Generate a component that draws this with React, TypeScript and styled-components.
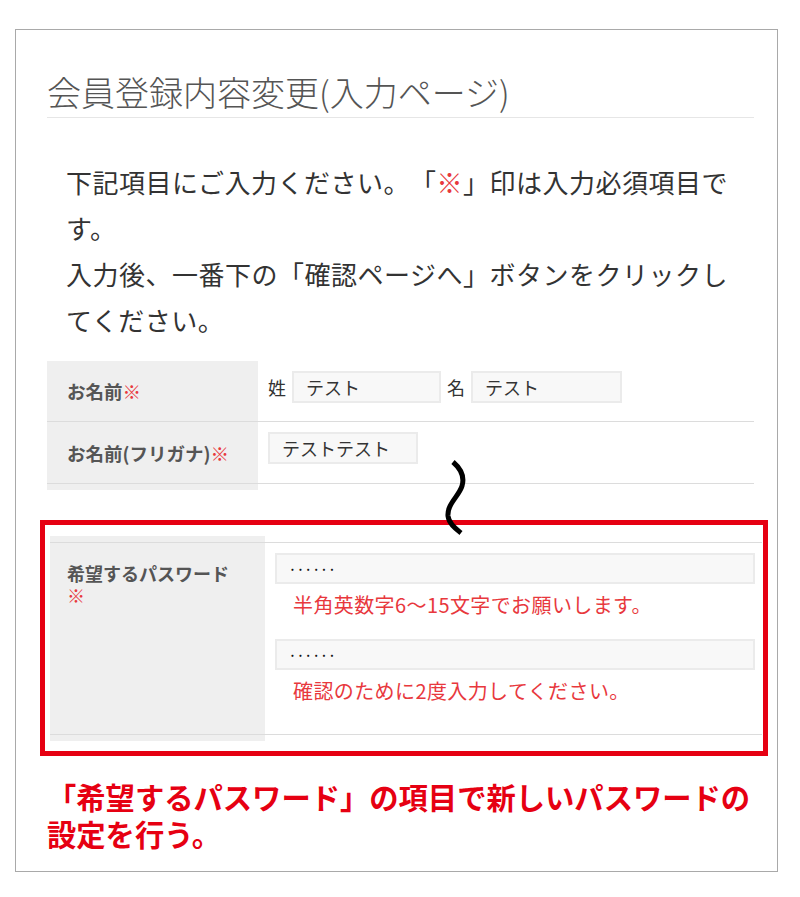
import styled, { createGlobalStyle } from "styled-components";

const GlobalStyle = createGlobalStyle`
  body {
    margin: 0;
    background: #fff;
    font-family: "Noto Sans CJK JP", "Noto Sans", sans-serif;
    text-spacing-trim: space-all;
  }
`;

const Frame = styled.div`
  position: relative;
  box-sizing: border-box;
  width: 763px;
  height: 843px;
  margin: 29px 0 0 15px;
  border: 1px solid #a9a9a9;
  padding: 42px 23px 0 31px;
`;

const Title = styled.h1`
  margin: 0;
  padding-bottom: 5px;
  font-size: 34px;
  line-height: 40px;
  font-weight: 300;
  color: #555;
  border-bottom: 1px solid #e6e6e6;
`;

const Intro = styled.p`
  width: 670px;
  margin: 41px 0 0 19px;
  font-size: 26px;
  line-height: 46px;
  letter-spacing: 0.5px;
  color: #333;
`;

const Mark = styled.span`
  color: #e8383d;
`;

const Table = styled.div`
  margin-top: 18px;
`;

const Row = styled.div<{ $height: number }>`
  display: grid;
  grid-template-columns: 211px 1fr;
  height: ${(p) => p.$height}px;
  border-bottom: 1px solid #dcdcdc;
`;

const Label = styled.div`
  display: flex;
  align-items: center;
  padding: 0 20px;
  background: #efefef;
  font-size: 18.5px;
  font-weight: 700;
  color: #555;
`;

const Value = styled.div`
  display: flex;
  align-items: flex-start;
  gap: 6px;
  padding: 10px 0 0 10px;
  font-size: 18px;
  color: #333;
`;

const Kanji = styled.span`
  line-height: 32px;
`;

const Input = styled.div<{ $width: number }>`
  box-sizing: border-box;
  width: ${(p) => p.$width}px;
  height: 32px;
  padding-left: 12px;
  background: #f8f8f8;
  border: 2px solid #ebebeb;
  font-size: 18px;
  line-height: 28px;
  color: #333;
`;

// grey stub of the label column where the table is cut off
const Cut = styled.div<{ $width: number }>`
  width: ${(p) => p.$width}px;
  height: 6px;
  background: #efefef;
`;

const Squiggle = styled.svg`
  position: absolute;
  left: 428px;
  top: 428px;
`;

const Highlight = styled.div`
  box-sizing: border-box;
  width: 728px;
  margin: 30px 0 0 -7px;
  border: 5px solid #e60012;
  padding: 11px 1px 10px 5px;
`;

const PassRow = styled.div`
  display: grid;
  grid-template-columns: 215px 1fr;
  border-top: 1px solid #dcdcdc;
  border-bottom: 1px solid #dcdcdc;
`;

const PassLabel = styled.div`
  padding: 19px 30px 0 17px;
  background: #efefef;
  font-size: 18px;
  line-height: 22px;
  font-weight: 700;
  color: #555;
`;

const PassValue = styled.div`
  display: flex;
  flex-direction: column;
  padding: 10px 0 31px 10px;
`;

const PassInput = styled(Input)`
  height: 31px;
  padding-left: 14px;
  letter-spacing: 5px;
  font-size: 8.5px;
  line-height: 27px;
  color: #111;
`;

const Hint = styled.div<{ $last?: boolean }>`
  margin: 9px 0 ${(p) => (p.$last ? 0 : 22)}px 18px;
  font-size: 20px;
  line-height: 24px;
  letter-spacing: 0.4px;
  color: #e8383d;
`;

const Caption = styled.p`
  margin: 22px 0 0;
  font-size: 29.3px;
  line-height: 37px;
  font-weight: 700;
  color: #e60012;
`;

export default function App() {
  return (
    <>
      <GlobalStyle />
      <Frame>
        <Title>会員登録内容変更(入力ページ)</Title>
        <Intro>
          下記項目にご入力ください。「<Mark>※</Mark>」印は入力必須項目です。
          <br />
          入力後、一番下の「確認ページへ」ボタンをクリックしてください。
        </Intro>

        <Table>
          <Row $height={60}>
            <Label>
              お名前<Mark>※</Mark>
            </Label>
            <Value>
              <Kanji>姓</Kanji>
              <Input $width={149}>テスト</Input>
              <Kanji>名</Kanji>
              <Input $width={151}>テスト</Input>
            </Value>
          </Row>
          <Row $height={61}>
            <Label>
              お名前(フリガナ)<Mark>※</Mark>
            </Label>
            <Value>
              <Input $width={150}>テストテスト</Input>
            </Value>
          </Row>
          <Cut $width={211} />
        </Table>

        <Squiggle width="30" height="80" viewBox="0 0 30 80">
          <path
            d="M9 4 C 16 10, 21 18, 18 28 C 15 38, 3 46, 4 58 C 5 66, 12 71, 17 75"
            fill="none"
            stroke="#000"
            strokeWidth="5"
          />
        </Squiggle>

        <Highlight>
          <Cut $width={215} />
          <PassRow>
            <PassLabel>
              希望するパスワード<Mark>※</Mark>
            </PassLabel>
            <PassValue>
              <PassInput $width={480}>••••••</PassInput>
              <Hint>半角英数字6〜15文字でお願いします。</Hint>
              <PassInput $width={480}>••••••</PassInput>
              <Hint $last>確認のために2度入力してください。</Hint>
            </PassValue>
          </PassRow>
          <Cut $width={215} />
        </Highlight>

        <Caption>
          「希望するパスワード」の項目で新しいパスワードの
          <br />
          設定を行う。
        </Caption>
      </Frame>
    </>
  );
}
